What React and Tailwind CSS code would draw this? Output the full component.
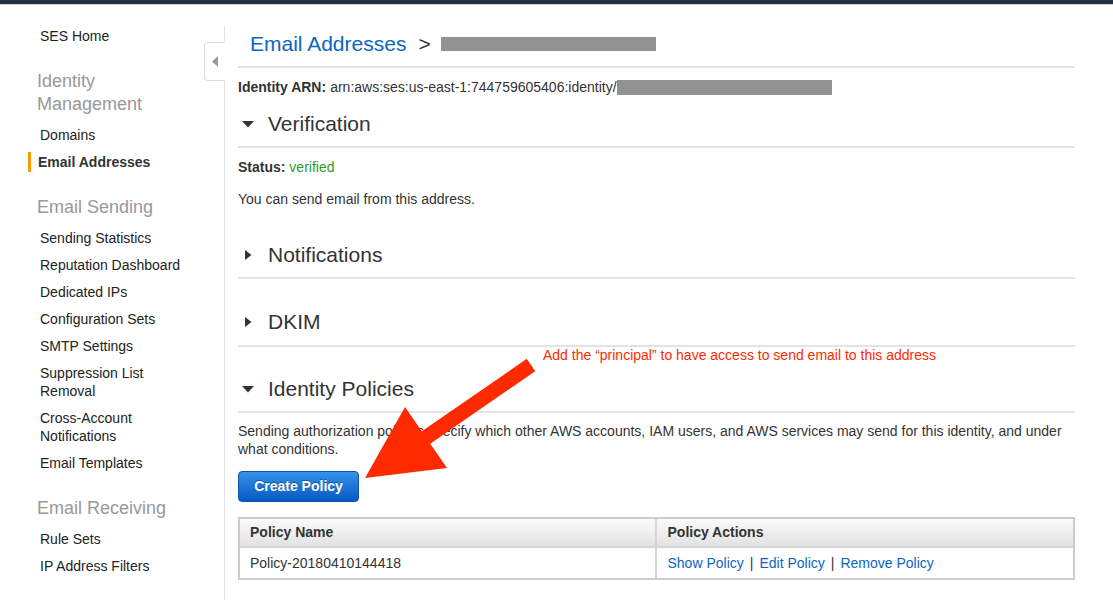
import React from "react";

const font = { fontFamily: '"Liberation Sans", Arial, Helvetica, sans-serif' };

const SideItem = ({ children, active }) => (
  <div className="relative mb-[9px]">
    {active && (
      <span className="absolute left-[28px] top-[-1px] h-[20px] w-[3px] bg-[#ff9900]" />
    )}
    <div
      className={`text-[14px] leading-[18px] ${
        active ? "pl-[38px] font-bold text-[#333]" : "pl-[40px] text-[#222]"
      }`}
    >
      {children}
    </div>
  </div>
);

const SideHeading = ({ children, className }) => (
  <div className={`pl-[37px] text-[18px] leading-[23px] text-[#999] ${className}`}>
    {children}
  </div>
);

const Caret = ({ open }) => (
  <div className="flex w-[20px] justify-center">
    {open ? (
      <svg width="12" height="7" viewBox="0 0 12 7">
        <polygon points="0,0 12,0 6,6.5" fill="#333" />
      </svg>
    ) : (
      <svg width="7" height="10" viewBox="0 0 7 10">
        <polygon points="0,0 6.5,5 0,10" fill="#333" />
      </svg>
    )}
  </div>
);

const Section = ({ title, open, className, pb = "pb-[9px]" }) => (
  <div
    className={`flex items-center border-b-2 border-[#e3e3e3] ${pb} ${className}`}
  >
    <Caret open={open} />
    <div className="ml-[10px] text-[21px] leading-[26px] text-[#333]">{title}</div>
  </div>
);

export default function App() {
  return (
    <div className="relative h-[600px] w-[1113px] overflow-hidden bg-white" style={font}>
      {/* top strip */}
      <div className="h-[4px] bg-[#232f3e]" />
      <div className="h-[1px] bg-[#cfd3d8]" />

      <div className="flex h-[595px]">
        {/* sidebar */}
        <aside className="w-[225px] shrink-0 pt-[21px]">
          <div className="relative flex h-full flex-col border-r border-[#e5e5e5] pt-[1px]">
            <div className="absolute right-[-1px] top-[16px] flex h-[39px] w-[21px] items-center justify-center rounded-l-[4px] border border-r-0 border-[#dcdcdc] bg-white">
              <svg width="6" height="11" viewBox="0 0 6 11">
                <polygon points="6,0 0,5.5 6,11" fill="#9a9a9a" />
              </svg>
            </div>

            <SideItem>SES Home</SideItem>
            <SideHeading className="mt-[16px]">
              Identity
              <br />
              Management
            </SideHeading>
            <div className="mt-[10px] flex flex-col">
              <SideItem>Domains</SideItem>
              <SideItem active>Email Addresses</SideItem>
            </div>
            <SideHeading className="mt-[16px]">Email Sending</SideHeading>
            <div className="mt-[10px] flex flex-col">
              <SideItem>Sending Statistics</SideItem>
              <SideItem>Reputation Dashboard</SideItem>
              <SideItem>Dedicated IPs</SideItem>
              <SideItem>Configuration Sets</SideItem>
              <SideItem>SMTP Settings</SideItem>
              <SideItem>
                Suppression List
                <br />
                Removal
              </SideItem>
              <SideItem>
                Cross-Account
                <br />
                Notifications
              </SideItem>
              <SideItem>Email Templates</SideItem>
            </div>
            <SideHeading className="mt-[16px]">Email Receiving</SideHeading>
            <div className="mt-[10px] flex flex-col">
              <SideItem>Rule Sets</SideItem>
              <SideItem>IP Address Filters</SideItem>
            </div>
          </div>
        </aside>

        {/* main */}
        <main className="ml-[13px] w-[837px] shrink-0">
          <div className="flex items-center border-b-2 border-[#e3e3e3] pb-[9px] pl-[12px] pt-[26px]">
            <span className="text-[21px] leading-[26px] text-[#0b66c2]">Email Addresses</span>
            <span className="ml-[12px] text-[21px] leading-[26px] text-[#333]">&gt;</span>
            <span className="ml-[10px] h-[14px] w-[215px] bg-[#929292]" />
          </div>

          <div className="mt-[10px] flex items-center text-[14px] leading-[18px] text-[#333]">
            <span className="font-bold">Identity ARN:</span>
            <span className="ml-[4px]">arn:aws:ses:us-east-1:744759605406:identity/</span>
            <span className="h-[15px] w-[215px] bg-[#929292]" />
          </div>

          <Section title="Verification" open className="mt-[15px]" />

          <div className="mt-[10px] text-[14px] leading-[18px] text-[#333]">
            <span className="font-bold">Status:</span>{" "}
            <span className="text-[#2a9d2a]">verified</span>
          </div>
          <div className="mt-[14px] text-[14px] leading-[18px] text-[#333]">
            You can send email from this address.
          </div>

          <Section title="Notifications" className="mt-[34px]" />
          <Section title="DKIM" className="mt-[30px]" pb="pb-[10px]" />
          <Section title="Identity Policies" open className="mt-[29px]" />

          <p className="mt-[9px] text-[14px] leading-[18px] text-[#333]">
            Sending authorization policies specify which other AWS accounts, IAM users, and AWS
            services may send for this identity, and under what conditions.
          </p>

          <button className="mt-[13px] h-[31px] w-[121px] rounded-[4px] border border-[#0a55a8] bg-gradient-to-b from-[#3592ea] to-[#0459c2] text-[14px] font-bold text-white [text-shadow:0_-1px_0_rgba(0,0,0,0.35)]">
            Create Policy
          </button>

          <div className="mt-[15px] border-2 border-[#cccccc] text-[14px] text-[#333]">
            <div className="grid h-[29px] grid-cols-2 border-b-2 border-[#d5d5d5] bg-gradient-to-b from-[#fbfbfb] to-[#e2e2e2] font-bold">
              <div className="flex items-center border-r-2 border-[#d5d5d5] pl-[10px]">Policy Name</div>
              <div className="flex items-center pl-[11px]">Policy Actions</div>
            </div>
            <div className="grid h-[30px] grid-cols-2">
              <div className="flex items-center border-r-2 border-[#d5d5d5] pl-[10px]">
                Policy-20180410144418
              </div>
              <div className="flex items-center pl-[11px]">
                <span className="text-[#0b66c2]">Show Policy</span>
                <span className="mx-[6px]">|</span>
                <span className="text-[#0b66c2]">Edit Policy</span>
                <span className="mx-[6px]">|</span>
                <span className="text-[#0b66c2]">Remove Policy</span>
              </div>
            </div>
          </div>
        </main>
      </div>

      {/* annotation */}
      <div className="absolute left-[543px] top-[346px] text-[14px] leading-[18px] text-[#ff2a00]">
        Add the “principal” to have access to send email to this address
      </div>
      <svg
        className="pointer-events-none absolute left-0 top-0"
        width="1113"
        height="600"
        viewBox="0 0 1113 600"
      >
        <polygon
          points="526.8,358.8 421.8,431.3 405,407 365,478 447,468 430.2,443.7 535.2,371.2"
          fill="#ff2a00"
        />
      </svg>
    </div>
  );
}
